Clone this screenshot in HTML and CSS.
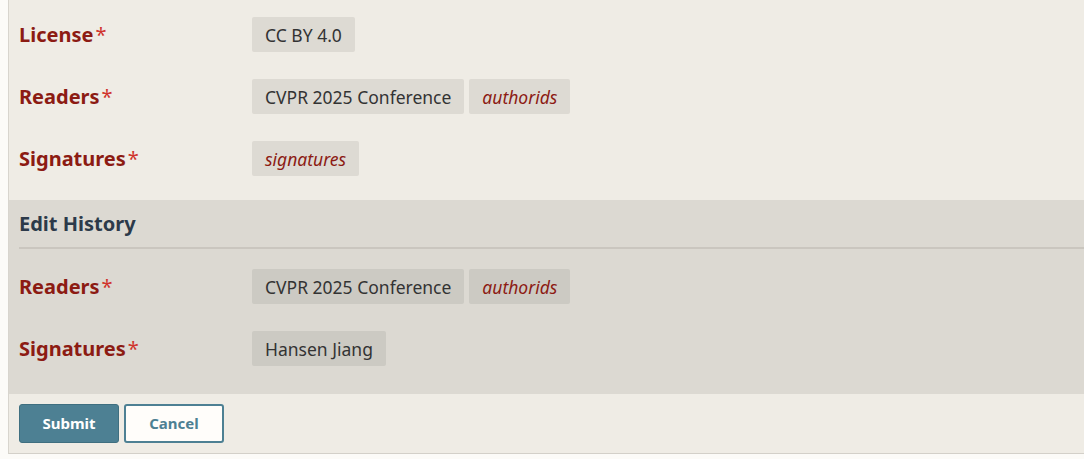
FILE: index.html
```html
<!DOCTYPE html>
<html>
<head>
<meta charset="utf-8">
<link rel="stylesheet" href="styles.css">
</head>
<body>
<div class="panel">
  <div class="fields main">
    <div class="row">
      <div class="label">License<span class="req">*</span></div>
      <div class="tags"><span class="tag">CC BY 4.0</span></div>
    </div>
    <div class="row">
      <div class="label">Readers<span class="req">*</span></div>
      <div class="tags"><span class="tag">CVPR 2025 Conference</span><span class="tag var">authorids</span></div>
    </div>
    <div class="row">
      <div class="label">Signatures<span class="req">*</span></div>
      <div class="tags"><span class="tag var">signatures</span></div>
    </div>
  </div>
  <div class="history">
    <h3 class="history-title">Edit History</h3>
    <div class="fields">
      <div class="row">
        <div class="label">Readers<span class="req">*</span></div>
        <div class="tags"><span class="tag">CVPR 2025 Conference</span><span class="tag var">authorids</span></div>
      </div>
      <div class="row">
        <div class="label">Signatures<span class="req">*</span></div>
        <div class="tags"><span class="tag">Hansen Jiang</span></div>
      </div>
    </div>
  </div>
  <div class="actions">
    <button class="btn primary">Submit</button>
    <button class="btn secondary">Cancel</button>
  </div>
</div>
</body>
</html>
```
FILE: styles.css
```css
html, body {
  margin: 0;
  padding: 0;
  background: #fcfbf8;
  overflow: hidden;
  font-family: "Noto Sans", "Open Sans", sans-serif;
}
.panel {
  margin-left: 8px;
  height: 454px;
  background: #efece5;
  border-left: 1px solid #d8d5ce;
  border-bottom: 1px solid #d3d0c9;
  box-sizing: border-box;
}
.fields {
  display: flex;
  flex-direction: column;
  gap: 27px;
  padding-left: 10px;
}
.main {
  padding-top: 17px;
  padding-bottom: 24px;
}
.row {
  display: grid;
  grid-template-columns: 233px 1fr;
  align-items: center;
  height: 35px;
}
.label {
  color: #8c1b13;
  font-weight: 700;
  font-size: 20px;
}
.req {
  color: #d0342c;
  font-weight: 400;
  margin-left: 2px;
}
.tags {
  display: flex;
  gap: 5px;
}
.tag {
  display: inline-flex;
  align-items: center;
  height: 35px;
  padding: 0 13px;
  background: #dddad3;
  border-radius: 2px;
  color: #333;
  font-size: 17.5px;
  box-sizing: border-box;
}
.tag.var {
  color: #8c1b13;
  font-style: italic;
}
.history {
  background: #dcd9d2;
  padding-bottom: 28px;
}
.history .tag {
  background: #cccac3;
}
.history-title {
  margin: 0 0 20px 10px;
  padding: 12px 0 11px;
  font-size: 20px;
  line-height: 24px;
  font-weight: 700;
  color: #2c3a4a;
  border-bottom: 2px solid #cac6bf;
}
.actions {
  display: flex;
  gap: 5px;
  padding: 10px 0 0 10px;
}
.btn {
  width: 100px;
  height: 39px;
  padding: 0 0 2px;
  border-radius: 3px;
  font-family: "Noto Sans", sans-serif;
  font-weight: 700;
  font-size: 15px;
  cursor: pointer;
}
.primary {
  background: #4d8093;
  border: 1px solid #3f6f80;
  color: #fff;
}
.secondary {
  background: #fffdfa;
  border: 2px solid #4d8093;
  color: #4d8093;
}
```
